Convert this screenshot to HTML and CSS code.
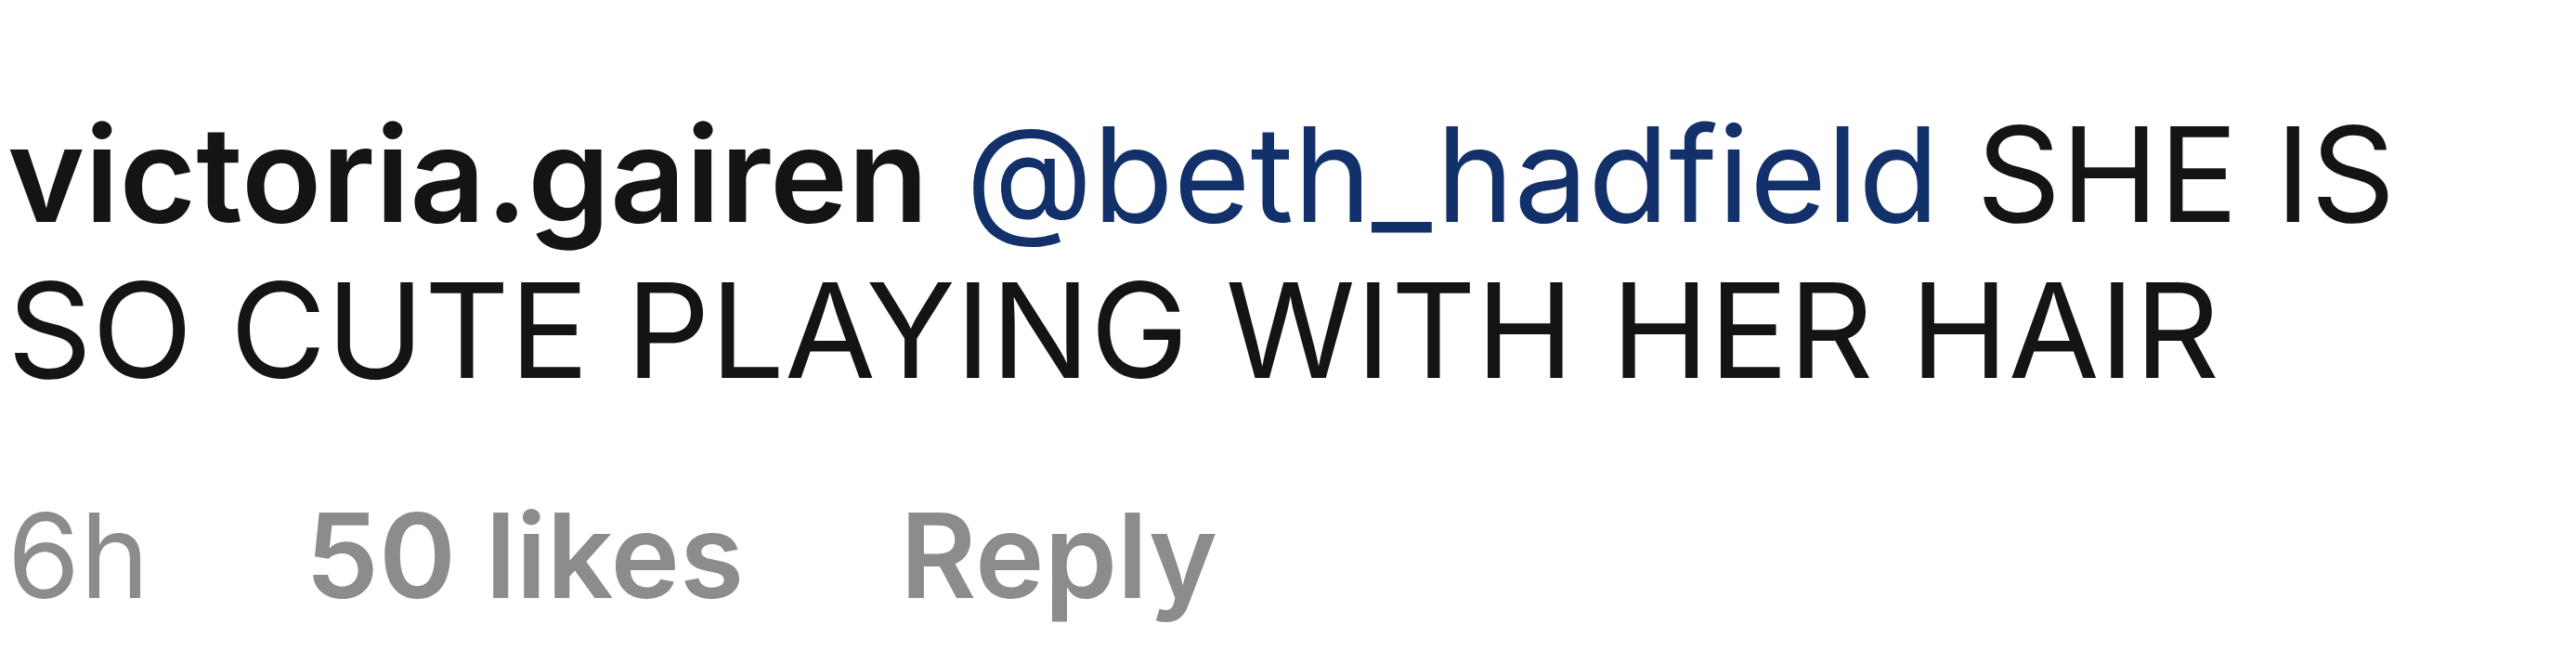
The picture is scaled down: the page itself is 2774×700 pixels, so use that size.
FILE: index.html
```html
<!DOCTYPE html>
<html lang="en">
<head>
    <meta charset="UTF-8">
    <title>Comment</title>
    <link rel="stylesheet" href="styles.css">
</head>
<body>
    <div class="comment">
        <p class="comment-body">
            <span class="username">victoria.gairen</span>
            <span class="mention">@beth_hadfield</span>
            <span class="text">SHE IS SO CUTE PLAYING WITH HER HAIR</span>
        </p>
        <div class="comment-meta">
            <span class="time">6h</span>
            <span class="likes">50 likes</span>
            <span class="reply">Reply</span>
        </div>
    </div>
</body>
</html>
```

FILE: styles.css
```css
body {
    margin: 0;
    padding: 103px 8px 0 8px;
    background: #fff;
    font-family: Inter, 'Liberation Sans', sans-serif;
}
.comment {
    max-width: 2700px;
}
.comment-body {
    margin: 0;
    font-size: 142px;
    line-height: 168px;
    color: #141414;
}
.username {
    font-weight: 600;
}
.mention {
    color: #12306a;
}
.comment-meta {
    display: flex;
    gap: 168px;
    margin-top: 84px;
    font-size: 126px;
    line-height: 1.2;
    color: #8c8c8c;
}
.likes, .reply {
    font-weight: 600;
}
```
